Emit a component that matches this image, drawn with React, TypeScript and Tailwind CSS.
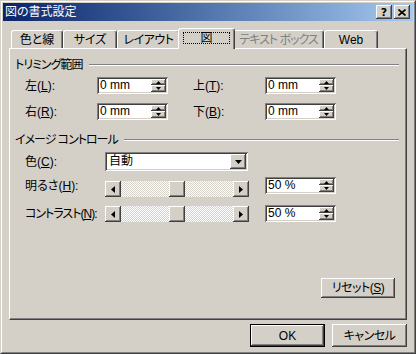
import React from "react";

const raised =
  "bg-[#d4d0c8] shadow-[inset_-1px_-1px_#404040,inset_1px_1px_#ffffff,inset_-2px_-2px_#808080]";
const sunken =
  "shadow-[inset_1px_1px_#808080,inset_-1px_-1px_#ffffff,inset_2px_2px_#404040,inset_-2px_-2px_#d4d0c8]";

function U({ c }: { c: string }) {
  return <span className="underline underline-offset-[1px]">{c}</span>;
}

function Tri({ dir }: { dir: "up" | "down" | "left" | "right" | "bigdown" }) {
  if (dir === "up")
    return (
      <svg width="5" height="3" viewBox="0 0 5 3">
        <polygon points="2.5,0 5,3 0,3" fill="#000" />
      </svg>
    );
  if (dir === "down")
    return (
      <svg width="5" height="3" viewBox="0 0 5 3">
        <polygon points="0,0 5,0 2.5,3" fill="#000" />
      </svg>
    );
  if (dir === "bigdown")
    return (
      <svg width="7" height="4" viewBox="0 0 7 4">
        <polygon points="0,0 7,0 3.5,4" fill="#000" />
      </svg>
    );
  if (dir === "left")
    return (
      <svg width="4" height="7" viewBox="0 0 4 7">
        <polygon points="4,0 4,7 0,3.5" fill="#000" />
      </svg>
    );
  return (
    <svg width="4" height="7" viewBox="0 0 4 7">
      <polygon points="0,0 0,7 4,3.5" fill="#000" />
    </svg>
  );
}

function SpinBox({ value }: { value: string }) {
  return (
    <div className={`w-[71px] h-[17px] bg-white flex p-[2px] ${sunken}`}>
      <div className="flex-1 pl-[1px] text-[12px] leading-[13px] text-black">{value}</div>
      <div className="w-[15px] flex flex-col">
        <div className={`h-[6px] ${raised} flex items-center justify-center`}>
          <Tri dir="up" />
        </div>
        <div className={`h-[7px] ${raised} flex items-center justify-center`}>
          <Tri dir="down" />
        </div>
      </div>
    </div>
  );
}

function ScrollBar() {
  return (
    <div className="w-[144px] h-[16px] flex">
      <div className={`w-[16px] h-[16px] ${raised} flex items-center justify-center`}>
        <Tri dir="left" />
      </div>
      <div className="flex-1 flex justify-center bg-[conic-gradient(#ffffff_25%,#d4d0c8_0_50%,#ffffff_0_75%,#d4d0c8_0)] bg-[length:2px_2px]">
        <div className={`w-[16px] h-[16px] ${raised}`} />
      </div>
      <div className={`w-[16px] h-[16px] ${raised} flex items-center justify-center`}>
        <Tri dir="right" />
      </div>
    </div>
  );
}

function GroupHeader({ title }: { title: string }) {
  return (
    <div className="flex items-center h-[12px] pr-[7px]">
      <span className="text-[12px] leading-[12px] whitespace-nowrap tracking-[-1px]">{title}</span>
      <div className="flex-1 ml-[6px] border-t border-t-[#808080] border-b border-b-white" />
    </div>
  );
}

const tabs = [
  { label: "色と線", cls: "w-[52px]" },
  { label: "サイズ", cls: "w-[54px]" },
  { label: "レイアウト", cls: "w-[63px] tracking-[-0.5px]" },
  { label: "図", cls: "w-[57px]", sel: true },
  { label: "テキスト ボックス", cls: "w-[91px] tracking-[-1px]", dis: true },
  { label: "Web", cls: "w-[54px]" },
];

export default function App() {
  return (
    <div className="w-[416px] h-[354px] bg-[#d4d0c8] border border-t-[#d4d0c8] border-l-[#d4d0c8] border-r-[#404040] border-b-[#404040] text-black [font-family:'Liberation_Sans','Noto_Sans_CJK_JP',sans-serif] [font-feature-settings:'palt'] text-[12px]">
      <div className="w-full h-full border border-t-white border-l-white border-r-[#808080] border-b-[#808080] p-[1px] flex flex-col">
        {/* title bar */}
        <div className="h-[18px] bg-linear-to-r from-[#0a246a] to-[#a6caf0] flex items-center pl-[2px] pr-[3px]">
          <span className="flex-1 text-white text-[12px] leading-[14px]">図の書式設定</span>
          <div className={`w-[16px] h-[14px] ${raised} flex items-center justify-center`}>
            <span className="text-[11px] leading-[11px] font-bold [font-family:'DejaVu_Sans',sans-serif]">?</span>
          </div>
          <div className={`w-[16px] h-[14px] ml-[2px] ${raised} flex items-center justify-center`}>
            <svg width="8" height="7" viewBox="0 0 8 7">
              <path d="M0.5,0.5 L7.5,6.5 M7.5,0.5 L0.5,6.5" stroke="#000" strokeWidth="1.6" fill="none" />
            </svg>
          </div>
        </div>

        <div className="flex-1 px-[6px] flex flex-col">
          {/* tabs */}
          <div className="mt-[7px] h-[20px] flex items-end pl-[2px]">
            {tabs.map((t) =>
              t.sel ? (
                <div
                  key={t.label}
                  className={`${t.cls} -mx-[2px] h-[21px] -mb-[1px] relative z-10 bg-[#d4d0c8] border-t border-l border-r border-t-white border-l-white border-r-[#404040] shadow-[inset_-1px_0_#808080] rounded-t-[3px] flex justify-center pt-[3px]`}
                >
                  <div className="w-[47px] h-[12px] border border-dotted border-black flex items-center justify-center">
                    <span className="text-[12px] leading-[12px]">{t.label}</span>
                  </div>
                </div>
              ) : (
                <div
                  key={t.label}
                  className={`${t.cls} h-[18px] border-t border-l border-r border-t-white border-l-white border-r-[#404040] shadow-[inset_-1px_0_#808080] rounded-t-[3px] flex items-center justify-center whitespace-nowrap ${t.dis ? "text-[#808080]" : "text-black"}`}
                >
                  {t.label}
                </div>
              )
            )}
          </div>

          {/* panel */}
          <div className="h-[272px] border border-t-white border-l-white border-r-[#404040] border-b-[#404040] shadow-[inset_-1px_-1px_#808080] flex flex-col pl-[5px] pt-[10px]">
            <GroupHeader title="トリミング範囲" />

            <div className="mt-[6px] h-[17px] flex items-center pl-[10px]">
              <span className="w-[72px]">
                左(<U c="L" />):
              </span>
              <SpinBox value="0 mm" />
              <span className="w-[72px] ml-[25px]">
                上(<U c="T" />):
              </span>
              <SpinBox value="0 mm" />
            </div>

            <div className="mt-[9px] h-[17px] flex items-center pl-[10px]">
              <span className="w-[72px]">
                右(<U c="R" />):
              </span>
              <SpinBox value="0 mm" />
              <span className="w-[72px] ml-[25px]">
                下(<U c="B" />):
              </span>
              <SpinBox value="0 mm" />
            </div>

            <div className="mt-[14px]">
              <GroupHeader title="イメージ コントロール" />
            </div>

            <div className="mt-[6px] h-[19px] flex items-center pl-[10px]">
              <span className="w-[80px]">
                色(<U c="C" />):
              </span>
              <div className={`w-[143px] h-[19px] bg-white flex p-[2px] ${sunken}`}>
                <div className="flex-1 pl-[2px] text-[12px] leading-[15px]">自動</div>
                <div className={`w-[16px] ${raised} flex items-center justify-center`}>
                  <Tri dir="bigdown" />
                </div>
              </div>
            </div>

            <div className="mt-[6px] h-[17px] flex items-center pl-[10px]">
              <span className="w-[80px] whitespace-nowrap">
                明るさ(<U c="H" />):
              </span>
              <div className="self-start mt-[4px]">
                <ScrollBar />
              </div>
              <div className="ml-[16px]">
                <SpinBox value="50 %" />
              </div>
            </div>

            <div className="mt-[11px] h-[17px] flex items-center pl-[10px]">
              <span className="w-[80px] whitespace-nowrap tracking-[-1px]">
                コントラスト(<U c="N" />):
              </span>
              <div className="self-start mt-[1px]">
                <ScrollBar />
              </div>
              <div className="ml-[16px]">
                <SpinBox value="50 %" />
              </div>
            </div>

            <div className="mt-[56px] flex justify-end pr-[11px]">
              <div className={`w-[74px] h-[20px] ${raised} flex items-center justify-center tracking-[-0.5px]`}>
                リセット(<U c="S" />)
              </div>
            </div>
          </div>

          {/* bottom buttons */}
          <div className="mt-[4px] flex justify-end gap-[7px]">
            <div className="w-[75px] h-[23px] border border-black bg-[#d4d0c8] shadow-[inset_-1px_-1px_#404040,inset_1px_1px_#ffffff,inset_-2px_-2px_#808080] flex items-center justify-center">
              OK
            </div>
            <div className={`w-[75px] h-[23px] ${raised} flex items-center justify-center tracking-[-0.5px]`}>
              キャンセル
            </div>
          </div>
        </div>
      </div>
    </div>
  );
}
